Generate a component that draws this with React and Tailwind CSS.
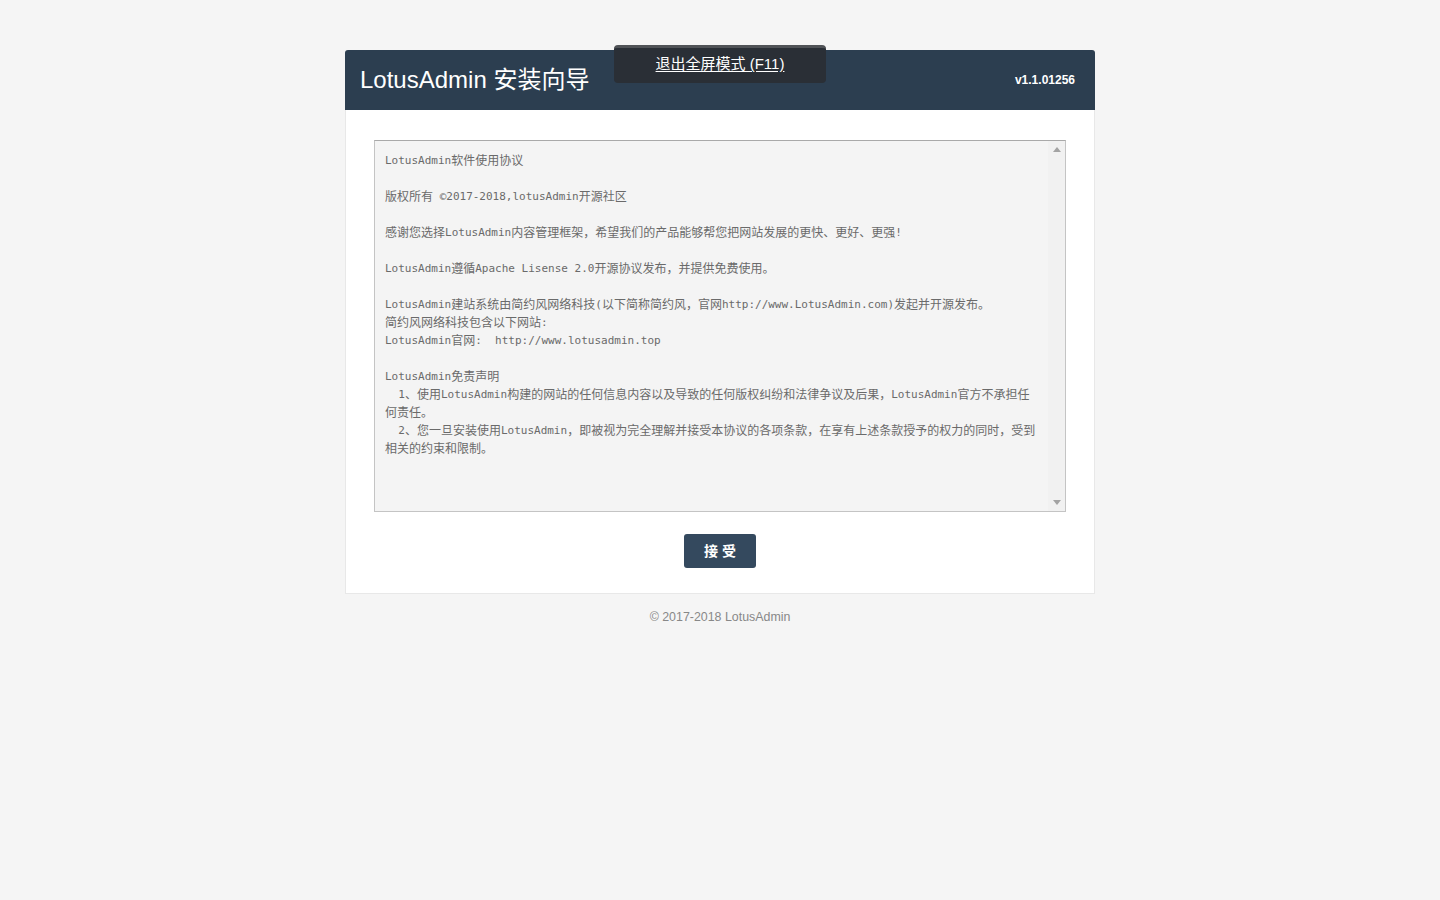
import React from "react";

const lines = [
  "LotusAdmin软件使用协议",
  "",
  "版权所有 ©2017-2018,lotusAdmin开源社区",
  "",
  "感谢您选择LotusAdmin内容管理框架，希望我们的产品能够帮您把网站发展的更快、更好、更强!",
  "",
  "LotusAdmin遵循Apache Lisense 2.0开源协议发布，并提供免费使用。",
  "",
  "LotusAdmin建站系统由简约风网络科技(以下简称简约风，官网http://www.LotusAdmin.com)发起并开源发布。",
  "简约风网络科技包含以下网站:",
  "LotusAdmin官网:  http://www.lotusadmin.top",
  "",
  "LotusAdmin免责声明",
  "  1、使用LotusAdmin构建的网站的任何信息内容以及导致的任何版权纠纷和法律争议及后果，LotusAdmin官方不承担任",
  "何责任。",
  "  2、您一旦安装使用LotusAdmin，即被视为完全理解并接受本协议的各项条款，在享有上述条款授予的权力的同时，受到",
  "相关的约束和限制。",
];

function Line({ text }) {
  if (!text) return <div className="h-[18px]"></div>;
  const parts = text.match(/[\u0000-\u00ff]+|[^\u0000-\u00ff]+/g) || [];
  return (
    <div className="h-[18px] leading-[18px] whitespace-pre">
      {parts.map((p, i) =>
        /^[\u0000-\u00ff]/.test(p) ? (
          <span key={i} className="align-[1px] text-[11px] [font-family:'DejaVu_Sans_Mono',monospace]">
            {p}
          </span>
        ) : (
          <span key={i} className="text-[12px]">
            {p}
          </span>
        )
      )}
    </div>
  );
}

export default function App() {
  return (
    <div className="relative min-h-[900px] w-full bg-[#f5f5f5] pt-[50px] [font-family:'Liberation_Sans','Noto_Sans_CJK_SC',sans-serif]">
      {/* fullscreen overlay */}
      <div className="absolute left-[614px] top-[45px] flex h-[38px] w-[212px] items-center justify-center rounded-[4px] border-t-[3px] border-[#505357] bg-[#2a2f36] pb-[2px] text-[15px] text-white underline underline-offset-2">
        退出全屏模式 (F11)
      </div>

      <div className="mx-auto w-[750px]">
        <div className="flex h-[60px] items-center justify-between rounded-t-[3px] bg-[#2c3e50] pl-[15px] pr-[20px]">
          <div className="text-[24px] leading-none text-white">LotusAdmin 安装向导</div>
          <div className="text-[12px] font-bold text-white">v1.1.01256</div>
        </div>
        <div className="border border-t-0 border-[#e8e8e8] bg-white px-[28px] pb-[25px] pt-[30px]">
          <div className="flex h-[372px] border border-[#c4c4c4] border-t-[#a9a9a9] bg-[#f4f4f4]">
            <div className="flex-1 overflow-hidden pl-[10px] pt-[8px] text-[#6a6a6a] [font-family:'Noto_Sans_CJK_SC',sans-serif]">
              {lines.map((l, i) => (
                <Line key={i} text={l} />
              ))}
            </div>
            <div className="flex w-[17px] flex-col items-center justify-between bg-[#f1f1f1] py-[6px]">
              <svg width="8" height="5" viewBox="0 0 8 5">
                <path d="M0 5 L4 0 L8 5 Z" fill="#a3a3a3" />
              </svg>
              <svg width="8" height="5" viewBox="0 0 8 5">
                <path d="M0 0 L8 0 L4 5 Z" fill="#a3a3a3" />
              </svg>
            </div>
          </div>
          <div className="mt-[22px] flex justify-center">
            <button className="h-[34px] w-[72px] rounded-[3px] bg-[#34495e] text-[14px] font-bold text-white whitespace-pre">
              接 受
            </button>
          </div>
        </div>
        <div className="mt-[14px] text-center text-[12.4px] text-[#888]">© 2017-2018 LotusAdmin</div>
      </div>
    </div>
  );
}
